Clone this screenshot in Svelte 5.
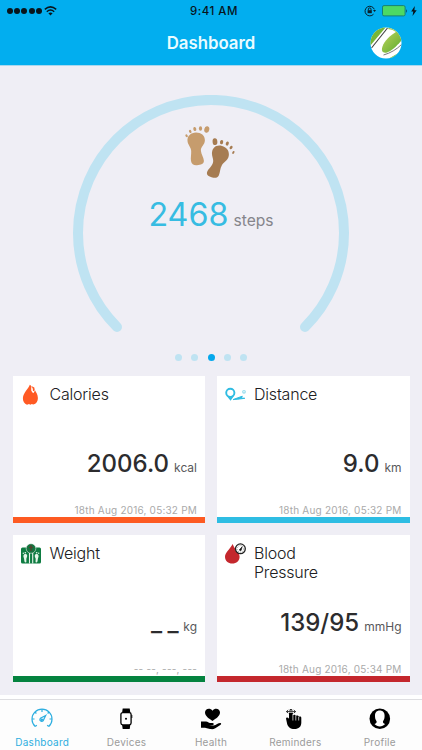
<script>
  const activePage = 2;

  const cards = [
    { id: 'calories', title: 'Calories', value: '2006.0', unit: 'kcal', date: '18th Aug 2016, 05:32 PM' },
    { id: 'distance', title: 'Distance', value: '9.0', unit: 'km', date: '18th Aug 2016, 05:32 PM' },
    { id: 'weight', title: 'Weight', value: '_ _', unit: 'kg', date: '-- --, ---, ---' },
    { id: 'pressure', title: 'Blood Pressure', value: '139/95', unit: 'mmHg', date: '18th Aug 2016, 05:34 PM' }
  ];

  const tabs = ['Dashboard', 'Devices', 'Health', 'Reminders', 'Profile'];
  let activeTab = $state('Dashboard');
</script>

<div class="app">
  <header>
    <div class="status">
      <div class="signal">
        {#each Array(5) as _}
          <i></i>
        {/each}
        <svg width="13" height="10" viewBox="0 0 13 10" fill="none" stroke="#08151c" stroke-width="1.5">
          <path d="M.8 3.4Q6.5-1.6 12.2 3.4M2.8 5.7Q6.5 2.4 10.2 5.7" />
          <path d="M4.4 7.3Q6.5 5.6 8.6 7.3L6.5 9.5Z" fill="#08151c" stroke="none" />
        </svg>
      </div>
      <span class="time">9:41 AM</span>
      <div class="power">
        <svg width="12" height="12" viewBox="0 0 12 12" fill="none" stroke="#08202c">
          <path d="M10.3 4.3A4.8 4.8 0 1 0 9.5 9.2" />
          <path d="M9 5h3L10.6 7Z" fill="#08202c" stroke="none" />
          <path d="M3.6 5.2h4.2v3H3.6z" fill="#08202c" stroke="none" />
          <path d="M4.4 5.4V4.2a1.3 1.3 0 0 1 2.6 0v1.2" />
        </svg>
        <svg class="battery" width="26" height="12" viewBox="0 0 26 12">
          <rect x=".5" y=".6" width="22.6" height="10.3" rx="1.5" fill="#4cd964" stroke="#167f78" />
          <path d="M24 4q1.6 2 0 4z" fill="#08303c" />
        </svg>
        <svg width="6" height="10" viewBox="0 0 6 10"><path d="M3.8 0 .2 5.4h2.1L1.5 10 5.7 4.2H3.4Z" fill="#08151c" /></svg>
      </div>
    </div>
    <div class="navbar">
      <h1>Dashboard</h1>
      <svg class="logo" width="32" height="32" viewBox="0 0 32 32">
        <defs>
          <clipPath id="ball"><circle cx="16" cy="16" r="15.5" /></clipPath>
          <linearGradient id="leaf" x1="0" y1="0" x2="1" y2="1">
            <stop offset="0" stop-color="#bfd45b" />
            <stop offset="1" stop-color="#59aa2e" />
          </linearGradient>
        </defs>
        <g clip-path="url(#ball)">
          <path d="M0 0h32v32H0z" fill="#fff" />
          <path d="M0 0H16L0 19Z" fill="#78b637" />
          <path d="M32 5C32 9 32 12 31 14 26 20 21 24 17 25.500c-4.500 1-6-1.500-4.500-6C14.500 13.500 20 8.500 27.500 4Z" fill="url(#leaf)" />
          <path d="M19 0 29 4 26 5Q23 2.500 18 2Z" fill="#a9cb54" />
          <path d="M18 32 32 24v8Z" fill="#79bd37" />
          <path d="M1.500 21 17.500 1" stroke="#3c3c3c" stroke-width="1.100" />
          <path d="M13.500 28Q24 25 31.500 17.500" stroke="#555" fill="none" stroke-width=".8" />
        </g>
      </svg>
    </div>
  </header>

  <main>
    <section class="gauge">
      <svg class="arc" width="276" height="240" viewBox="0 0 276 240">
        <path d="M44 232A133 133 0 1 1 232 232" />
      </svg>
      <div class="reading">
        <svg class="feet" width="52" height="54" viewBox="0 0 52 54">
          <g fill="#c69c6d">
            <path d="M12 8.500c-5 0-9 3.500-8.500 8.500.4 4 3.500 6 3.700 10 .1 4-.7 7-.2 10 .6 3.500 3 4.500 6 4.200 4-.3 7-1.500 6.900-4.500-.2-3.300-2.800-6.200-3-10.200-.2-4 3.800-5.500 4-10 .2-5.200-3.900-8-8.900-8Z" />
            <ellipse cx="22.900" cy="5.600" rx="2.500" ry="3.300" transform="rotate(12 23 5)" />
            <ellipse cx="16.500" cy="4.500" rx="1.600" ry="2.200" />
            <ellipse cx="10.800" cy="5" rx="1.500" ry="2" transform="rotate(-15 11 5)" />
            <ellipse cx="6" cy="7.500" rx="1.200" ry="1.700" transform="rotate(-25 6 7)" />
            <ellipse cx="2.800" cy="11.600" rx="1.100" ry="1.500" transform="rotate(-35 3 12)" />
          </g>
          <g fill="#a67c52">
            <path d="M38 22c-5.500-1.500-9.500 1.500-10 6.500-.4 4 1.900 6.500 1 10-1 4-5 6.500-5.900 9.500-.9 3 1.400 4.300 4.400 5.200 3.500 1 6 .9 7.300-1.700 1.500-3 1-7 3.200-10.500 2.300-3.500 6.200-4.500 6.800-9.500.6-5-2.300-8.300-6.800-9.500Z" />
            <ellipse cx="31" cy="17.700" rx="2.400" ry="3.400" transform="rotate(-5 31 18)" />
            <ellipse cx="37.600" cy="18" rx="1.600" ry="2.200" transform="rotate(12 37 18)" />
            <ellipse cx="43.100" cy="19.500" rx="1.500" ry="2.100" transform="rotate(20 43 20)" />
            <ellipse cx="47.400" cy="23.400" rx="1.300" ry="1.900" transform="rotate(35 47 23)" />
            <ellipse cx="49.500" cy="28.200" rx="1" ry="1.600" transform="rotate(30 49 28)" />
          </g>
        </svg>
        <p class="steps"><strong>2468</strong><span>steps</span></p>
      </div>
    </section>

    <div class="pager">
      {#each Array(5) as _, i}
        <i class:current={i === activePage}></i>
      {/each}
    </div>

    <section class="cards">
      {#each cards as card (card.id)}
        <article class="card {card.id}">
          <div class="card-head">
            <svg width="22" height="22" viewBox="0 0 22 22">
              {#if card.id === 'calories'}
                <path d="M9.800.800C8.500 5 3.300 8.500 2.900 14c-.2 3.300 1.500 5.800 4.100 6.700l2-.8 1.300.9 1.500-.8 1.500.6c3-.7 4.700-3.400 4.600-6.600C17.800 10.500 16 8.500 15.200 6.600q-1.200 1.200-1.800 2.600L11.500 7C12 4 11.500 1.500 9.800.800Z" fill="#ff5a24" />
                <path d="M11.400 2 14.300 3.500l.5 3-1.900.8Q13 4.500 11.400 2Z" fill="#ff5a24" />
                <path d="M11.700 3.500q-.3 3 1.200 5" stroke="#fff" stroke-width=".9" fill="none" />
              {:else if card.id === 'distance'}
                <circle cx="6.300" cy="8.800" r="4.100" fill="none" stroke="#2fbce2" stroke-width="1.900" />
                <path d="m2.500 11.700 4.100 5.100 3.700-5.200-3.900 1.700Z" fill="#2fbce2" />
                <path d="m9 15.600 9.300-3.400-1 1.900 3.500.2-7 .9Z" stroke="#2fbce2" stroke-width="1" fill="#2fbce2" />
                <circle cx="20" cy="7.800" r="1.300" fill="none" stroke="#98dced" stroke-width="1.200" />
              {:else if card.id === 'weight'}
                <rect x="1" y="4.500" width="20" height="16" rx="1.500" fill="#0e7c42" />
                <circle cx="11" cy="5.500" r="4.800" fill="#16733f" stroke="#fff" stroke-width=".5" />
                <path d="M9 4.500h4M11 2v6" stroke="#583d2c" stroke-width="1.200" />
                <path d="M9.500 10v10.500M12.700 10v10.500" stroke="#e5f2e9" stroke-width="1.100" />
                <g fill="#e5f6e9">
                  <path d="M5.700 11c2 .2 1.700 2.600.8 4.200-.6 1.300.7 4.200-.9 4.300-1.600 0-1.100-3.200-1.800-4.700-.9-2-.3-4 1.900-3.800Z" />
                  <path d="M16.300 11c-2 .2-1.700 2.600-.8 4.200.6 1.300-.7 4.200.9 4.300 1.600 0 1.100-3.200 1.800-4.700.9-2 .3-4-1.900-3.800Z" />
                  <circle cx="3.300" cy="10.300" r=".7" /><circle cx="5.300" cy="9.700" r=".8" />
                  <circle cx="16.700" cy="9.700" r=".8" /><circle cx="18.700" cy="10.300" r=".7" />
                </g>
              {:else}
                <path d="M8.700 1C6 6 1 9.600 1 13.700c0 4 3.200 6.800 7.300 6.800s7.300-2.800 7.300-6.800C15.500 9.300 10.500 6.500 8.700 1Z" fill="#c4272d" />
                <circle cx="16.400" cy="5.800" r="4.900" fill="#fff" stroke="#222" stroke-width="1.300" />
                <circle cx="16.400" cy="5.800" r="3.300" fill="none" stroke="#666" stroke-width=".8" stroke-dasharray=".8 1.400" />
                <path d="m15.300 7.100 2.800-3.300-1.100 3.800Z" stroke="#222" stroke-width=".8" />
              {/if}
            </svg>
            <h2>{card.title}</h2>
          </div>
          <p class="measure"><strong>{card.value}</strong><span>{card.unit}</span></p>
          <time>{card.date}</time>
        </article>
      {/each}
    </section>
  </main>

  <nav>
    {#each tabs as tab}
      <button class:active={activeTab === tab} onclick={() => (activeTab = tab)}>
        <svg width="22" height="22" viewBox="0 0 22 22">
          {#if tab === 'Dashboard'}
            <g fill="none" stroke="currentColor" stroke-width="1.200">
              <path d="M4.300 18.500A10 10 0 1 1 17.700 18.500" />
              <path d="M11 1v3M1 11h2.500M18.500 11H21M3.900 4l1.500 1.500M18.100 4l-1.500 1.500M4.300 18.500l1.500-1.400M17.700 18.500l-1.500-1.400" />
              <path d="M14.700 7.500 9.400 10.300a1.800 1.800 0 1 0 2.700 2.500Z" />
              <circle cx="10.800" cy="11.700" r=".7" />
            </g>
          {:else if tab === 'Devices'}
            <path d="M6.700.500h7l.6 4H6.100ZM6.100 17h8.200l-.6 4h-7Z" />
            <rect x="4.900" y="4.600" width="10.200" height="12.300" rx="1.800" fill="#fff" stroke="currentColor" stroke-width="1.300" />
            <path d="M15.500 7h.8v3h-.8z" />
            <circle cx="10" cy="10.800" r="1" />
          {:else if tab === 'Health'}
            <path d="M12.500 13C9 10.500 5 8 5 4.500 5 .6 10-.8 12.500 2.700 15-.8 20 .6 20 4.500c0 3.500-4 6-7.500 8.500Z" />
            <path d="M1 13.500h5c2 0 2.500 1.300 4 1.400h2.500c2 .2 1.600 2-.1 2.100l-3.400.1 4.500.4c3-.4 4.700-2.700 7-2.500 1.200.4.600 1.500-.2 2l-5 3.300c-1.800 1.200-3.500 1-5.300.8L5 19.700H1Z" />
          {:else if tab === 'Reminders'}
            <path d="M5 3.500C5 .100 8.900.100 8.900 3.500v3.700c.9-.9 2.500-.6 2.700.5l.4.200c.8-.9 2.500-.5 2.700.6l.4.200c.9-.7 2.200-.2 2.200 1.100v5c0 3.800-2.500 6.300-6.800 6.300-4.100 0-7-2.400-7.600-6.400L2 10.500c.1-1.300 1.800-1.500 2.500-.4L5 11Z" />
            <path d="M8.900 6v6.500M11.800 8v4.500M14.700 9v3.500" stroke="#fff" stroke-width=".7" fill="none" />
            <path d="M2.800 2.500h8.300v2.200H2.800z" fill="#fff" />
            <path d="M2.500 3.600h9M4.200 2 2.500 3.600l1.700 1.600M9.800 2l1.700 1.600-1.700 1.600" fill="none" stroke="currentColor" stroke-width=".8" />
          {:else}
            <circle cx="10.800" cy="10.800" r="10.300" />
            <path d="M10.800 2.600c3.300 0 4.800 2.100 4.800 5.200 0 2-.4 4-1.400 5.100-.8 1 .1 2.600 1.900 3.200-2.700 3.100-7.900 3.100-10.600 0 1.800-.6 2.700-2.200 1.900-3.200-1-1.100-1.400-3.100-1.400-5.100 0-3.100 1.500-5.200 4.800-5.200Z" fill="#fff" />
          {/if}
        </svg>
        <span>{tab}</span>
      </button>
    {/each}
  </nav>
</div>

<style>
  :global(body) {
    margin: 0;
  }

  .app {
    display: flex;
    flex-direction: column;
    width: 422px;
    height: 750px;
    overflow: hidden;
    background: #efeef5;
    font-family: Inter, "Liberation Sans", sans-serif;
  }

  h1, h2, p {
    margin: 0;
  }

  svg {
    display: block;
    flex: none;
  }

  header {
    height: 65px;
    background: #02aeef;
    border-bottom: 1px solid #a9d8ef;
  }

  .status {
    display: grid;
    grid-template-columns: 1fr auto 1fr;
    align-items: center;
    height: 21px;
    padding: 0 5px 0 7px;
    color: #08151c;
  }

  .signal, .power {
    display: flex;
    align-items: center;
  }

  .signal i {
    width: 6px;
    height: 6px;
    margin-right: 1.2px;
    border-radius: 50%;
    background: #08151c;
  }

  .signal svg {
    margin-left: 1px;
  }

  .time {
    padding-left: 4px;
    font-size: 11.5px;
    font-weight: 500;
    letter-spacing: 0.5px;
  }

  .power {
    justify-content: flex-end;
  }

  .battery {
    margin: 0 3px 0 6px;
  }

  .navbar {
    display: grid;
    grid-template-columns: 1fr auto 1fr;
    align-items: center;
    height: 44px;
  }

  h1 {
    grid-column: 2;
    color: #e9fbff;
    font-size: 16.8px;
    font-weight: 600;
    line-height: 44px;
  }

  .logo {
    justify-self: end;
    margin-right: 20px;
  }

  main {
    flex: 1;
    padding: 29px 12.5px 0;
  }

  .gauge {
    display: grid;
    justify-content: center;
    height: 240px;
  }

  .arc, .reading {
    grid-area: 1 / 1;
  }

  .arc path {
    fill: none;
    stroke: #bfe3f2;
    stroke-width: 10;
    stroke-linecap: round;
  }

  .reading {
    display: flex;
    flex-direction: column;
    align-items: center;
    padding-top: 29px;
  }

  .feet {
    margin-right: 2px;
  }

  .steps {
    display: flex;
    align-items: baseline;
    gap: 5px;
    margin-top: 17px;
    line-height: 40px;
  }

  .steps strong {
    color: #37bce2;
    font-size: 32.3px;
    font-weight: 400;
  }

  .steps span {
    color: #85858b;
    font-size: 15.6px;
  }

  .pager {
    display: flex;
    justify-content: center;
    gap: 9.2px;
    height: 7px;
    margin: 19px 0 15px;
  }

  .pager i {
    width: 7px;
    border-radius: 50%;
    background: #bfe3f2;
  }

  .pager .current {
    background: #05a8ec;
  }

  .cards {
    display: grid;
    grid-template-columns: 1fr 1fr;
    gap: 12px;
  }

  .card {
    display: flex;
    flex-direction: column;
    box-sizing: border-box;
    height: 147px;
    padding: 8px 8px 0 7px;
    border-bottom: 6px solid;
    background: #fff;
  }

  .calories {
    border-color: #fd5a22;
  }

  .distance {
    border-color: #2ebde3;
  }

  .weight {
    border-color: #04833f;
  }

  .pressure {
    border-color: #c4272d;
  }

  .card-head {
    display: flex;
    gap: 8px;
    height: 62px;
  }

  h2 {
    width: 90px;
    padding-top: 1px;
    color: #202022;
    font-size: 16px;
    font-weight: 300;
    line-height: 19px;
    letter-spacing: -0.2px;
  }

  .measure {
    display: flex;
    align-items: baseline;
    justify-content: flex-end;
    gap: 5px;
    line-height: 38px;
  }

  .measure strong {
    color: #2c2c2e;
    font-size: 24px;
    font-weight: 500;
  }

  .measure span {
    color: #58585b;
    font-size: 12px;
  }

  .weight strong {
    letter-spacing: -0.4px;
  }

  time {
    margin-top: 16px;
    color: #aaa;
    font-size: 10px;
    line-height: 14px;
    text-align: right;
    letter-spacing: 0.2px;
  }

  nav {
    display: grid;
    grid-template-columns: repeat(5, 1fr);
    box-sizing: border-box;
    height: 55px;
    padding-top: 3px;
    background: linear-gradient(#fff 4px, #dedee1 4px, #dedee1 5px, #fdfdfd 5px);
  }

  button {
    display: flex;
    flex-direction: column;
    align-items: center;
    padding: 10px 0 0;
    border: 0;
    background: none;
    color: #000;
    font-family: inherit;
  }

  button svg {
    fill: currentColor;
  }

  button span {
    margin-top: 5px;
    color: #9b9b9b;
    font-size: 10px;
    line-height: 14px;
    letter-spacing: 0.25px;
  }

  .active, .active span {
    color: #2daee0;
  }
</style>
